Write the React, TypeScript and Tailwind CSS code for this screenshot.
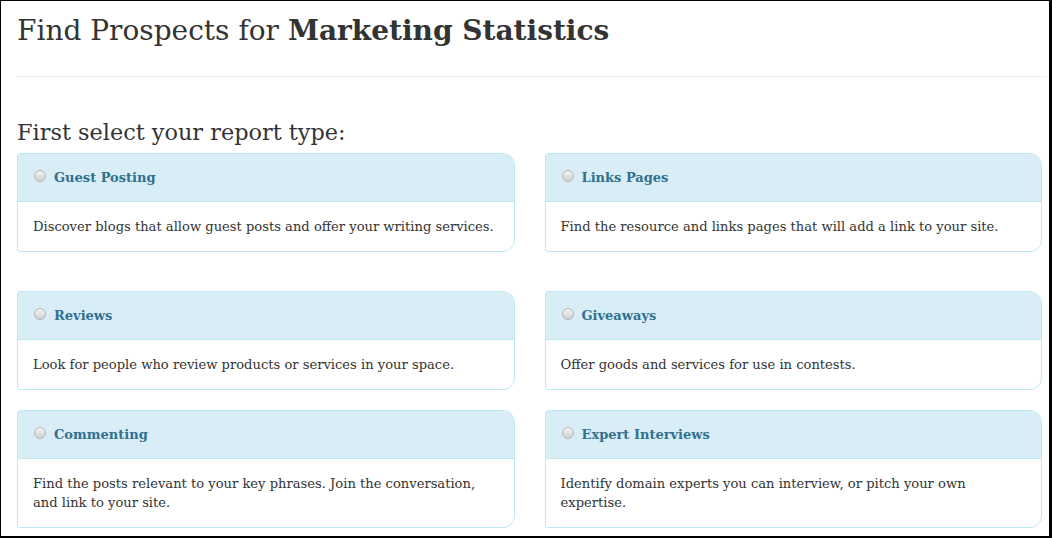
const reports = [
  [
    { title: 'Guest Posting', text: 'Discover blogs that allow guest posts and offer your writing services.' },
    { title: 'Links Pages', text: 'Find the resource and links pages that will add a link to your site.' },
  ],
  [
    { title: 'Reviews', text: 'Look for people who review products or services in your space.' },
    { title: 'Giveaways', text: 'Offer goods and services for use in contests.' },
  ],
  [
    { title: 'Commenting', text: 'Find the posts relevant to your key phrases. Join the conversation, and link to your site.' },
    { title: 'Expert Interviews', text: 'Identify domain experts you can interview, or pitch your own expertise.' },
  ],
];

const ReportCard = ({ title, text }: { title: string; text: string }) => (
  <label className="block border border-[#bce8f1] rounded-tl-[3px] rounded-bl-[3px] rounded-r-[12px] overflow-hidden bg-white cursor-pointer">
    <div className="h-[48px] flex items-center gap-[9px] pl-[16px] bg-[#d9edf7] border-b border-[#bce8f1]">
      <span className="w-[12px] h-[12px] rounded-full border border-[#b4b4b4] bg-gradient-to-b from-[#f4f4f4] to-[#d0d0d0] -mt-[4px]" />
      <span className="text-[13px] font-bold text-[#31708f] -ml-[1px]">{title}</span>
    </div>
    <div className="px-[15px] py-[15px] text-[13.1px] leading-[19px] text-[#333]">{text}</div>
  </label>
);

export default function App() {
  return (
    <div
      className="w-[1052px] h-[538px] box-border border-t border-l border-r-[3px] border-b-2 border-black bg-white overflow-hidden"
      style={{ fontFamily: '"DejaVu Serif", serif' }}
    >
      <div className="pl-[15px] pr-[2px]">
        <h1 className="pt-[12px] h-[76px] border-b border-[#eeeeee] text-[28px] leading-[36px] text-[#333] pl-[1px]">
          Find Prospects for <b>Marketing Statistics</b>
        </h1>
        <h2 className="mt-[40px] text-[22.4px] leading-[30px] text-[#333] pl-[1px]">First select your report type:</h2>
        <div className="mt-[6px] pr-[5px] pl-[1px]">
          {reports.map((row, i) => (
            <div
              key={i}
              className={`grid grid-cols-2 gap-[30px] ${i === 0 ? 'mb-[39px]' : 'mb-[20px]'}`}
            >
              {row.map((r) => (
                <ReportCard key={r.title} title={r.title} text={r.text} />
              ))}
            </div>
          ))}
        </div>
      </div>
    </div>
  );
}
